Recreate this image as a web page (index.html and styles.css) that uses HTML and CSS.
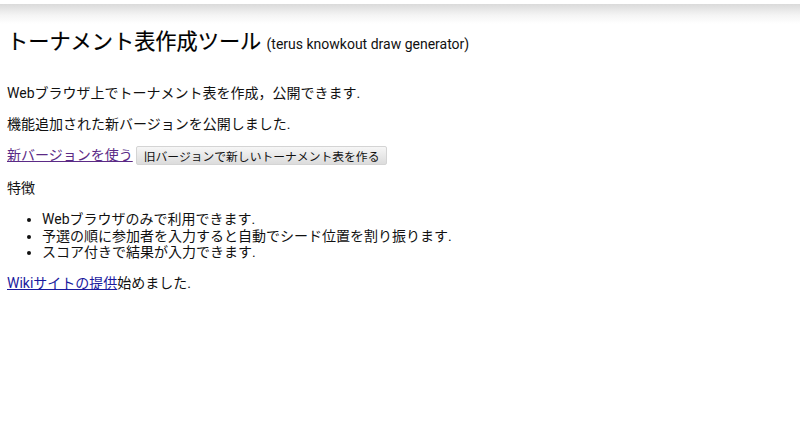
FILE: index.html
```html
<!DOCTYPE html>
<html lang="ja">
<head>
<meta charset="utf-8">
<title>トーナメント表作成ツール</title>
<link rel="stylesheet" href="styles.css">
</head>
<body>
<div class="topshade"></div>
<main class="page">
  <h1 class="title">トーナメント表作成ツール <small class="subtitle">(terus knowkout draw generator)</small></h1>
  <p class="para">Webブラウザ上でトーナメント表を作成，公開できます.</p>
  <p class="para">機能追加された新バージョンを公開しました.</p>
  <p class="para actions"><a class="link visited" href="#new">新バージョンを使う</a> <button class="btn" type="button">旧バージョンで新しいトーナメント表を作る</button></p>
  <p class="para">特徴</p>
  <ul class="features">
    <li>Webブラウザのみで利用できます.</li>
    <li>予選の順に参加者を入力すると自動でシード位置を割り振ります.</li>
    <li>スコア付きで結果が入力できます.</li>
  </ul>
  <p class="para"><a class="link" href="#wiki">Wikiサイトの提供</a>始めました.</p>
</main>
</body>
</html>
```
FILE: styles.css
```css
html, body {
  margin: 0;
  padding: 0;
  background: #ffffff;
}
body {
  font-family: Roboto, "Noto Sans CJK JP", sans-serif;
  color: #111111;
  font-size: 14px;
  line-height: 16.5px;
}
.topshade {
  height: 20px;
  margin-top: 4px;
  margin-bottom: -24px;
  background: linear-gradient(#dadada, #f4f4f4 55%, #ffffff);
}
.page {
  padding: 29px 7px 0 7px;
}
.title {
  margin: 0 0 30px 0;
  font-size: 21.2px;
  line-height: 26px;
  height: 26px;
  font-weight: 400;
  color: #000000;
  -webkit-text-stroke: 0.2px #000000;
}
.subtitle {
  font-size: 14px;
  color: #111111;
  -webkit-text-stroke: 0;
}
.para {
  margin: 0 0 14.5px 0;
  height: 16.5px;
}
.actions {
  display: flex;
  align-items: center;
  gap: 3px;
  height: 17px;
  margin-bottom: 16px;
}
.link {
  color: #1a1a9e;
  text-decoration: underline;
}
.link.visited {
  color: #5b2a86;
}
.btn {
  font-family: "Noto Sans CJK JP", sans-serif;
  font-size: 11.8px;
  line-height: 14px;
  height: 19px;
  padding: 1px 7px;
  color: #111111;
  background: linear-gradient(#f6f6f6, #dcdcdc);
  border: 1px solid #d4d4d4;
  border-radius: 2px;
}
.features {
  margin: 0 0 14.5px 0;
  padding-left: 35px;
}
.features li {
  height: 16.5px;
  line-height: 16.5px;
}
```
